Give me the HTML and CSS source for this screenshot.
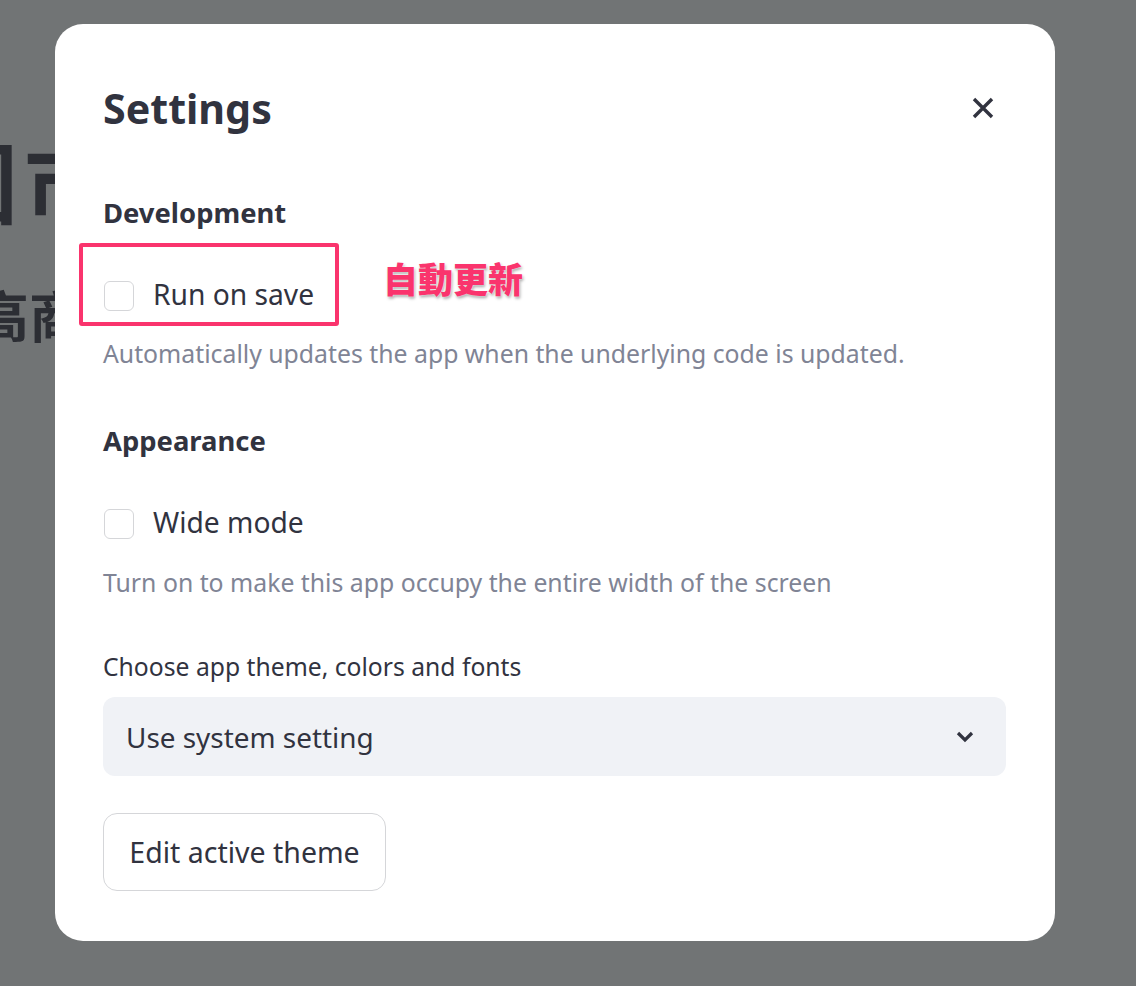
FILE: index.html
```html
<!DOCTYPE html>
<html lang="en">
<head>
<meta charset="utf-8">
<link rel="stylesheet" href="styles.css">
</head>
<body>
<div class="page">
  <div class="bg-title">國市場</div>
  <div class="bg-sub">高商業</div>
</div>
<div class="modal">
  <div class="header">
    <h1 class="title">Settings</h1>
    <svg class="close" width="22" height="22" viewBox="0 0 22 22"><path d="M2 2 L20 20 M20 2 L2 20" stroke="#31333f" stroke-width="3.4" stroke-linecap="butt" fill="none"/></svg>
  </div>
  <h2 class="section first">Development</h2>
  <div class="check-row annotated">
    <span class="box"></span><span class="label">Run on save</span>
    <span class="mark"></span>
    <span class="note">自動更新</span>
  </div>
  <p class="desc d1">Automatically updates the app when the underlying code is updated.</p>
  <h2 class="section second">Appearance</h2>
  <div class="check-row r2">
    <span class="box"></span><span class="label">Wide mode</span>
  </div>
  <p class="desc d2">Turn on to make this app occupy the entire width of the screen</p>
  <p class="field-label">Choose app theme, colors and fonts</p>
  <div class="select">
    <span class="select-text">Use system setting</span>
    <svg class="chev" width="18" height="12" viewBox="0 0 18 12"><path d="M2 2 L9 9 L16 2" stroke="#31333f" stroke-width="3.2" fill="none"/></svg>
  </div>
  <button class="btn">Edit active theme</button>
</div>
</body>
</html>
```
FILE: styles.css
```css
html, body {
  margin: 0;
  padding: 0;
}
body {
  width: 1136px;
  height: 986px;
  background: #717475;
  overflow: hidden;
  position: relative;
  font-family: "Noto Sans", "Noto Sans CJK TC", sans-serif;
  color: #31333f;
}
.page {
  padding-top: 134px;
  font-family: "Noto Sans CJK TC", sans-serif;
  font-weight: 700;
  color: #2c2e34;
}
.bg-title {
  margin-left: -70px;
  font-size: 88px;
  line-height: 88px;
  letter-spacing: 6px;
  white-space: nowrap;
}
.bg-sub {
  margin-top: 64px;
  margin-left: -26px;
  font-size: 55px;
  line-height: 55px;
  white-space: nowrap;
}
.modal {
  position: absolute;
  left: 55px;
  top: 24px;
  width: 1000px;
  height: 917px;
  box-sizing: border-box;
  background: #fff;
  border-radius: 28px;
  padding: 54px 49px 0 48px;
}
.header {
  height: 60px;
  display: flex;
  align-items: center;
  justify-content: space-between;
}
.title {
  margin: 0;
  font-size: 41.2px;
  font-weight: 700;
  line-height: 60px;
}
.close {
  margin-right: 12px;
}
.section {
  margin: 0;
  font-size: 27.4px;
  font-weight: 700;
  line-height: 36px;
}
.section.first { margin-top: 57px; }
.section.second { margin-top: 54px; }
.check-row {
  position: relative;
  display: flex;
  align-items: center;
  height: 40px;
  margin-top: 45px;
}
.box {
  width: 28px;
  height: 28px;
  border: 1.5px solid #d5d6d9;
  border-radius: 6px;
  margin-left: 1px;
  flex: none;
}
.label {
  margin-left: 19px;
  font-size: 28.2px;
  line-height: 36px;
  position: relative;
  top: -2px;
}
.mark {
  position: absolute;
  left: -24px;
  top: -33px;
  width: 252px;
  height: 75px;
  border: 4px solid #fa346d;
  border-radius: 3px;
}
.note {
  position: absolute;
  left: 280px;
  top: -18px;
  font-family: "Noto Sans CJK TC", sans-serif;
  font-weight: 900;
  font-size: 35px;
  line-height: 40px;
  color: #fa346d;
  text-shadow: 0 0 2px #fff, 1px 2px 3px rgba(0,0,0,0.35);
}
.desc {
  margin: 0;
  font-size: 24.8px;
  line-height: 32px;
  color: #808495;
}
.d1 { margin-top: 21px; }
.d2 { margin-top: 22px; }
.field-label {
  margin: 53px 0 0;
  font-size: 24.7px;
  line-height: 32px;
}
.select {
  margin-top: 14px;
  height: 79px;
  background: #f0f2f6;
  border-radius: 12px;
  display: flex;
  align-items: center;
  justify-content: space-between;
  padding: 0 32px 0 23px;
}
.select-text {
  font-size: 27.9px;
  line-height: 36px;
}
.btn {
  display: block;
  margin-top: 37px;
  height: 78px;
  width: 283px;
  box-sizing: border-box;
  background: #fff;
  border: 1.5px solid #d5d6d9;
  border-radius: 14px;
  font-family: inherit;
  font-size: 28.5px;
  color: #31333f;
  padding: 0;
}
```
